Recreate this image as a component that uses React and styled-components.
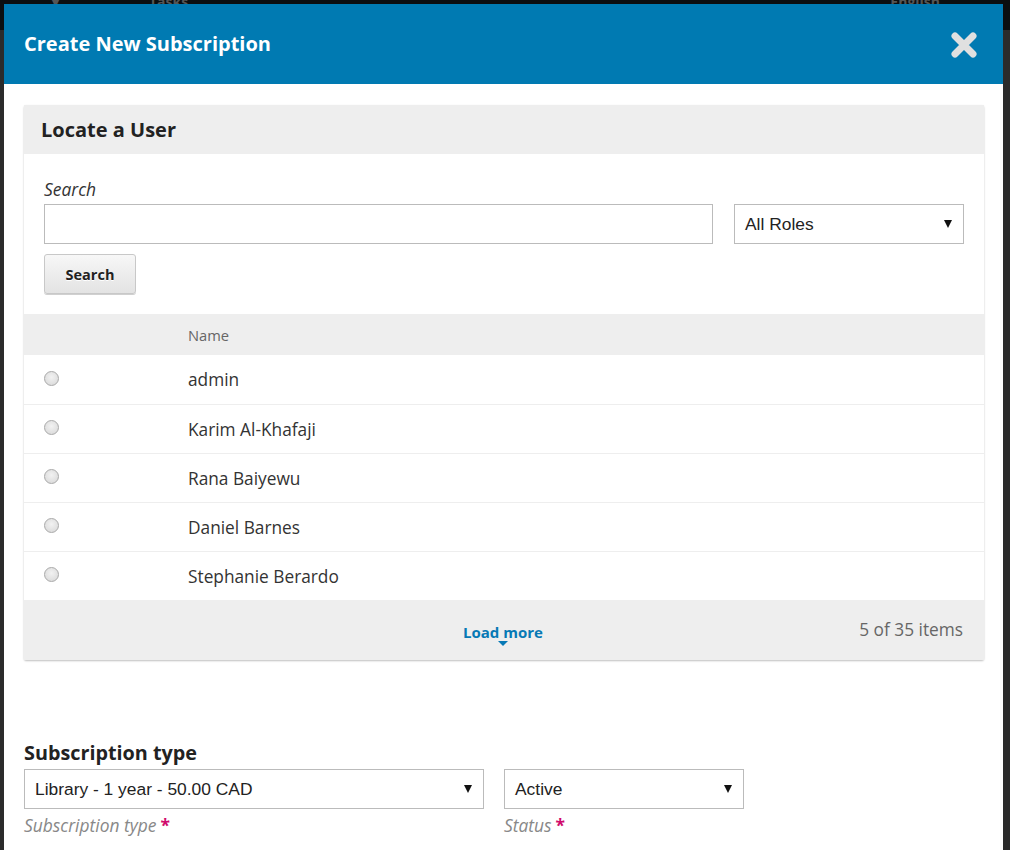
import React from "react";
import styled, { createGlobalStyle } from "styled-components";

const Global = createGlobalStyle`
  html, body { margin: 0; padding: 0; }
  body {
    background: #2b2b2b;
    font-family: "Open Sans", "Noto Sans", sans-serif;
    height: 850px;
    overflow: hidden;
  }
  * { box-sizing: border-box; }
`;

const Page = styled.div`
  position: relative;
  width: 1010px;
  height: 850px;
  background: #2b2b2b;
  overflow: hidden;
`;

const TopBar = styled.div`
  height: 30px;
  background: #0b0e10;
  display: flex;
  align-items: flex-start;
  justify-content: space-between;
  padding: 0 70px 0 0;
  color: #555;
  font-size: 14px;
  font-weight: 700;
  line-height: 8px;
`;

const TopLeft = styled.div`
  display: flex;
  gap: 10px;
  padding-left: 52px;
  margin-top: -2px;
`;

const TopRight = styled.div`
  margin-top: -2px;
`;

const Modal = styled.div`
  position: absolute;
  left: 4px;
  top: 4px;
  width: 999px;
  bottom: -40px;
  background: #fff;
  display: flex;
  flex-direction: column;
`;

const ModalHeader = styled.div`
  height: 80px;
  background: #007ab2;
  display: flex;
  align-items: center;
  justify-content: space-between;
  padding: 0 25px 0 20px;
  flex-shrink: 0;
`;

const Title = styled.h1`
  margin: 0 0 2px 0;
  color: #fff;
  font-size: 20px;
  font-weight: 700;
`;

const CloseBtn = styled.button`
  border: 0;
  background: none;
  padding: 0;
  width: 28px;
  height: 28px;
  margin-top: 2px;
  display: flex;
  align-items: center;
  justify-content: center;
  cursor: pointer;
`;

const Body = styled.div`
  padding: 21px 19px 0 20px;
`;

const Panel = styled.div`
  background: #fff;
  box-shadow: 0 1px 2px rgba(0, 0, 0, 0.25);
  border-radius: 2px;
`;

const PanelHeader = styled.div`
  height: 49px;
  background: #eee;
  display: flex;
  align-items: center;
  padding-left: 17px;
  font-size: 20px;
  font-weight: 700;
  color: #222;
`;

const SearchForm = styled.div`
  padding: 24px 20px 20px 20px;
`;

const FieldLabel = styled.div`
  font-style: italic;
  font-size: 17.4px;
  color: #333;
  line-height: 22px;
  margin-bottom: 4px;
`;

const SearchRow = styled.div`
  display: flex;
  gap: 21px;
`;

const TextInput = styled.input`
  flex: 1;
  height: 40px;
  border: 1px solid #bbb;
  border-radius: 0;
  font-size: 16px;
  padding: 0 10px;
  outline: none;
`;

const SelectBox = styled.div`
  width: ${(p) => p.$w}px;
  height: 40px;
  border: 1px solid #bbb;
  display: flex;
  align-items: center;
  justify-content: space-between;
  padding: 0 10px 0 10px;
  font-family: "Liberation Sans", Arial, sans-serif;
  font-size: 17.4px;
  color: #222;
  background: #fff;
  flex-shrink: 0;
`;

const Caret = styled.span`
  width: 0;
  height: 0;
  border-left: 4px solid transparent;
  border-right: 4px solid transparent;
  border-top: 8px solid #111;
  margin-right: 1px;
`;

const Button = styled.button`
  margin-top: 10px;
  width: 92px;
  height: 40px;
  border: 1px solid #c8c8c8;
  border-radius: 3px;
  background: linear-gradient(#f7f7f7, #e3e3e3);
  box-shadow: 0 1px 0 #d0d0d0;
  font-family: "Open Sans", "Noto Sans", sans-serif;
  font-weight: 700;
  font-size: 14.5px;
  color: #222;
  text-shadow: 0 1px 0 #fff;
  padding: 0;
`;

const Table = styled.div`
  display: flex;
  flex-direction: column;
`;

const HeadRow = styled.div`
  height: 41px;
  background: #eee;
  display: flex;
  align-items: center;
  padding-left: 164px;
  font-size: 14.7px;
  color: #666;
`;

const Row = styled.div`
  height: 49px;
  display: flex;
  align-items: center;
  border-top: ${(p) => (p.$first ? "0" : "1px solid #eee")};
  font-size: 17.3px;
  color: #333;
`;

const RadioCell = styled.div`
  width: 164px;
  padding-left: 20px;
  display: flex;
  align-items: center;
  margin-top: -3px;
`;

const Radio = styled.span`
  width: 15px;
  height: 15px;
  border-radius: 50%;
  border: 1px solid #a9a9a9;
  background: radial-gradient(circle at 50% 40%, #f2f2f2, #d6d6d6);
  display: inline-block;
`;

const Footer = styled.div`
  height: 60px;
  background: #eee;
  display: flex;
  align-items: center;
  position: relative;
  padding-right: 21px;
`;

const LoadMore = styled.a`
  position: absolute;
  left: 0;
  right: 0;
  top: 23px;
  text-align: center;
  color: #0779b5;
  font-weight: 700;
  font-size: 15px;
  text-decoration: none;
  display: flex;
  flex-direction: column;
  align-items: center;
  line-height: 18px;
  padding-right: 2px;
`;

const SmallCaret = styled.span`
  width: 0;
  height: 0;
  border-left: 5px solid transparent;
  border-right: 5px solid transparent;
  border-top: 5px solid #0779b5;
  margin-top: 0px;
`;

const Count = styled.div`
  margin-left: auto;
  font-size: 17.3px;
  color: #666;
  margin-top: -1px;
`;

const Section = styled.div`
  margin-top: 80px;
`;

const SectionTitle = styled.div`
  font-size: 19.8px;
  font-weight: 700;
  color: #222;
  line-height: 26px;
  margin-bottom: 3px;
`;

const FieldRow = styled.div`
  display: flex;
  gap: 20px;
`;

const Field = styled.div`
  display: flex;
  flex-direction: column;
`;

const Hint = styled.div`
  font-style: italic;
  font-size: 17.4px;
  color: #888;
  margin-top: 5px;
  line-height: 22px;
`;

const Req = styled.span`
  color: #d00a6c;
  font-style: normal;
  font-weight: 700;
  margin-left: 4px;
`;

const users = ["admin", "Karim Al-Khafaji", "Rana Baiyewu", "Daniel Barnes", "Stephanie Berardo"];

export default function App() {
  return (
    <>
      <Global />
      <Page>
        <TopBar>
          <TopLeft>
            <span>▾</span>
            <span style={{ marginLeft: 80 }}>Tasks</span>
          </TopLeft>
          <TopRight>English</TopRight>
        </TopBar>
        <Modal>
          <ModalHeader>
            <Title>Create New Subscription</Title>
            <CloseBtn aria-label="Close">
              <svg width="28" height="28" viewBox="0 0 28 28">
                <path
                  d="M5 5 L23 23 M23 5 L5 23"
                  stroke="#e0e0e0"
                  strokeWidth="7"
                  strokeLinecap="round"
                />
              </svg>
            </CloseBtn>
          </ModalHeader>
          <Body>
            <Panel>
              <PanelHeader>Locate a User</PanelHeader>
              <SearchForm>
                <FieldLabel>Search</FieldLabel>
                <SearchRow>
                  <TextInput />
                  <SelectBox $w={230}>
                    All Roles
                    <Caret />
                  </SelectBox>
                </SearchRow>
                <Button>Search</Button>
              </SearchForm>
              <Table>
                <HeadRow>Name</HeadRow>
                {users.map((u, i) => (
                  <Row key={u} $first={i === 0}>
                    <RadioCell>
                      <Radio />
                    </RadioCell>
                    {u}
                  </Row>
                ))}
              </Table>
              <Footer>
                <LoadMore href="#">
                  Load more
                  <SmallCaret />
                </LoadMore>
                <Count>5 of 35 items</Count>
              </Footer>
            </Panel>
            <Section>
              <SectionTitle>Subscription type</SectionTitle>
              <FieldRow>
                <Field>
                  <SelectBox $w={460}>
                    Library - 1 year - 50.00 CAD
                    <Caret />
                  </SelectBox>
                  <Hint>
                    Subscription type<Req>*</Req>
                  </Hint>
                </Field>
                <Field>
                  <SelectBox $w={240}>
                    Active
                    <Caret />
                  </SelectBox>
                  <Hint>
                    Status<Req>*</Req>
                  </Hint>
                </Field>
              </FieldRow>
            </Section>
          </Body>
        </Modal>
      </Page>
    </>
  );
}
